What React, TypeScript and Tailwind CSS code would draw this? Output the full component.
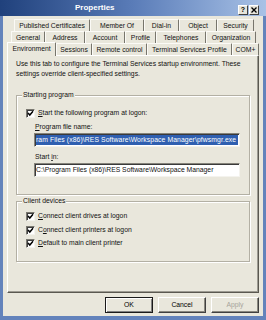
import React from "react";

const Check = () => (
  <div className="w-[9px] h-[9px] bg-white border border-t-[#7a7870] border-l-[#7a7870] border-b-[#f4f3ee] border-r-[#f4f3ee] shadow-[inset_1px_1px_0_#404040] flex items-center justify-center shrink-0">
    <svg width="7" height="7" viewBox="0 0 7 7">
      <path d="M1 3 L2.8 5 L6 1.3" stroke="#000" strokeWidth="1.5" fill="none" />
    </svg>
  </div>
);

type T = { label: string; w: number };

const row1: T[] = [
  { label: "Published Certificates", w: 76 },
  { label: "Member Of", w: 54 },
  { label: "Dial-in", w: 35 },
  { label: "Object", w: 38 },
  { label: "Security", w: 37 },
];
const row2: T[] = [
  { label: "General", w: 34 },
  { label: "Address", w: 40 },
  { label: "Account", w: 40 },
  { label: "Profile", w: 31 },
  { label: "Telephones", w: 50 },
  { label: "Organization", w: 50 },
];
const row3: T[] = [
  { label: "Environment", w: 49 },
  { label: "Sessions", w: 36 },
  { label: "Remote control", w: 55 },
  { label: "Terminal Services Profile", w: 85 },
  { label: "COM+", w: 27 },
];

const TabRow = ({ tabs, ml, sel }: { tabs: T[]; ml: string; sel?: boolean }) => (
  <div className={`flex h-[12px] ${ml}`}>
    {tabs.map((t, i) => (
      <div
        key={t.label}
        style={{ width: t.w }}
        className={
          sel && i === 0
            ? "relative z-10 -mt-[1px] h-[14px] flex items-start pt-[1px] justify-center border-t border-l border-t-white border-l-white border-r border-r-[#77756c] bg-[#e9e7dc] rounded-t-[1px] whitespace-nowrap"
            : "flex items-center justify-center border-t border-l border-t-[#fbfaf6] border-l-[#fbfaf6] border-r border-r-[#77756c] bg-[#e9e7dc] rounded-t-[1px] whitespace-nowrap"
        }
      >
        {t.label}
      </div>
    ))}
  </div>
);

const Btn = ({ children, def, dis }: { children: React.ReactNode; def?: boolean; dis?: boolean }) => (
  <div
    className={`w-[48px] h-[16px] flex items-center justify-center bg-[#e9e7dc] ${
      def
        ? "border border-[#1a1a1a] shadow-[inset_1px_1px_0_#fff,inset_-1px_-1px_0_#808080]"
        : "border border-t-white border-l-white border-b-[#404040] border-r-[#404040] shadow-[inset_-1px_-1px_0_#8a887f]"
    } ${dis ? "text-[#a6a49b]" : "text-black"}`}
  >
    {children}
  </div>
);

export default function App() {
  return (
    <div className="w-[266px] h-[320px] bg-[#6383bb] flex flex-col overflow-hidden text-[6.8px] leading-[10px] text-[#111] font-['Liberation_Sans',Arial,sans-serif]">
      {/* Title bar */}
      <div className="h-[16px] shrink-0 flex items-center bg-gradient-to-r from-[#20417c] via-[#5a7cb8] to-[#a9c2e6] relative">
        <div className="ml-[75px] text-white font-bold text-[8px] leading-[10px]">Properties</div>
        <div className="ml-auto mr-[7px] flex gap-[1px] mt-[3px]">
          <div className="w-[10px] h-[10px] bg-[#e6e4da] border border-t-white border-l-white border-b-[#404040] border-r-[#404040] flex items-center justify-center text-[7px] font-bold leading-none text-black">?</div>
          <div className="w-[10px] h-[10px] bg-[#e6e4da] border border-t-white border-l-white border-b-[#404040] border-r-[#404040] flex items-center justify-center">
            <svg width="6" height="6" viewBox="0 0 6 6">
              <path d="M0.5 0.5 L5.5 5.5 M5.5 0.5 L0.5 5.5" stroke="#000" strokeWidth="1.3" />
            </svg>
          </div>
        </div>
      </div>

      {/* Body */}
      <div className="flex-1 mx-[3px] mb-[4px] bg-[#e9e7dc] flex flex-col pt-[3px]">
        <TabRow tabs={row1} ml="ml-[11px]" />
        <TabRow tabs={row2} ml="ml-[8px]" />
        <TabRow tabs={row3} ml="ml-[4px]" sel />

        {/* Panel */}
        <div className="ml-[4px] w-[252px] h-[238px] border border-t-white border-l-white border-b-[#5a5850] border-r-[#5a5850] shadow-[inset_-1px_-1px_0_#9d9b92] flex flex-col">
          <div className="ml-[8px] mt-[3px]">
            <div>Use this tab to configure the Terminal Services startup environment. These</div>
            <div>settings override client-specified settings.</div>
          </div>

          {/* Group 1 */}
          <div className="relative ml-[8px] mt-[16px] w-[234px] h-[100px] border border-[#b3b0a4] shadow-[inset_1px_1px_0_#fff,1px_1px_0_#fff] flex flex-col">
            <span className="absolute -top-[6px] left-[5px] px-[1px] bg-[#e9e7dc]">Starting program</span>
            <div className="flex items-center gap-[3px] ml-[9px] mt-[12px] h-[10px]">
              <Check />
              <span>
                <u>S</u>tart the following program at logon:
              </span>
            </div>
            <div className="ml-[18px] mt-[4px] h-[10px]">
              <u>P</u>rogram file name:
            </div>
            <div className="ml-[17px] mt-[1px] w-[206px] h-[14px] bg-white border border-t-[#85837a] border-l-[#85837a] border-b-[#f4f3ee] border-r-[#f4f3ee] shadow-[inset_1px_1px_0_#3a3a3a] flex items-center px-[1px]">
              <span className="flex-1 bg-[#2f5fb0] text-white whitespace-nowrap h-[10px] leading-[10px] tracking-[0.1px]">
                ram Files (x86)\RES Software\Workspace Manager\pfwsmgr.exe
              </span>
            </div>
            <div className="ml-[18px] mt-[5px] h-[10px]">
              Start <u>i</u>n:
            </div>
            <div className="ml-[17px] mt-[1px] w-[206px] h-[14px] bg-white border border-t-[#85837a] border-l-[#85837a] border-b-[#f4f3ee] border-r-[#f4f3ee] shadow-[inset_1px_1px_0_#3a3a3a] flex items-center pl-[1px]">
              <span className="whitespace-nowrap">C:\Program Files (x86)\RES Software\Workspace Manager</span>
            </div>
          </div>

          {/* Group 2 */}
          <div className="relative ml-[8px] mt-[6px] w-[234px] h-[61px] border border-[#b3b0a4] shadow-[inset_1px_1px_0_#fff,1px_1px_0_#fff] flex flex-col">
            <span className="absolute -top-[6px] left-[5px] px-[1px] bg-[#e9e7dc]">Client devices</span>
            <div className="flex items-center gap-[3px] ml-[9px] mt-[9px] h-[10px]">
              <Check />
              <span>
                <u>C</u>onnect client drives at logon
              </span>
            </div>
            <div className="flex items-center gap-[3px] ml-[9px] mt-[4px] h-[10px]">
              <Check />
              <span>
                C<u>o</u>nnect client printers at logon
              </span>
            </div>
            <div className="flex items-center gap-[3px] ml-[9px] mt-[3px] h-[10px]">
              <Check />
              <span>
                <u>D</u>efault to main client printer
              </span>
            </div>
          </div>
        </div>

        {/* Buttons */}
        <div className="flex justify-end gap-[5px] mr-[4px] mt-[4px]">
          <Btn def>OK</Btn>
          <Btn>Cancel</Btn>
          <Btn dis>Apply</Btn>
        </div>
      </div>
    </div>
  );
}
